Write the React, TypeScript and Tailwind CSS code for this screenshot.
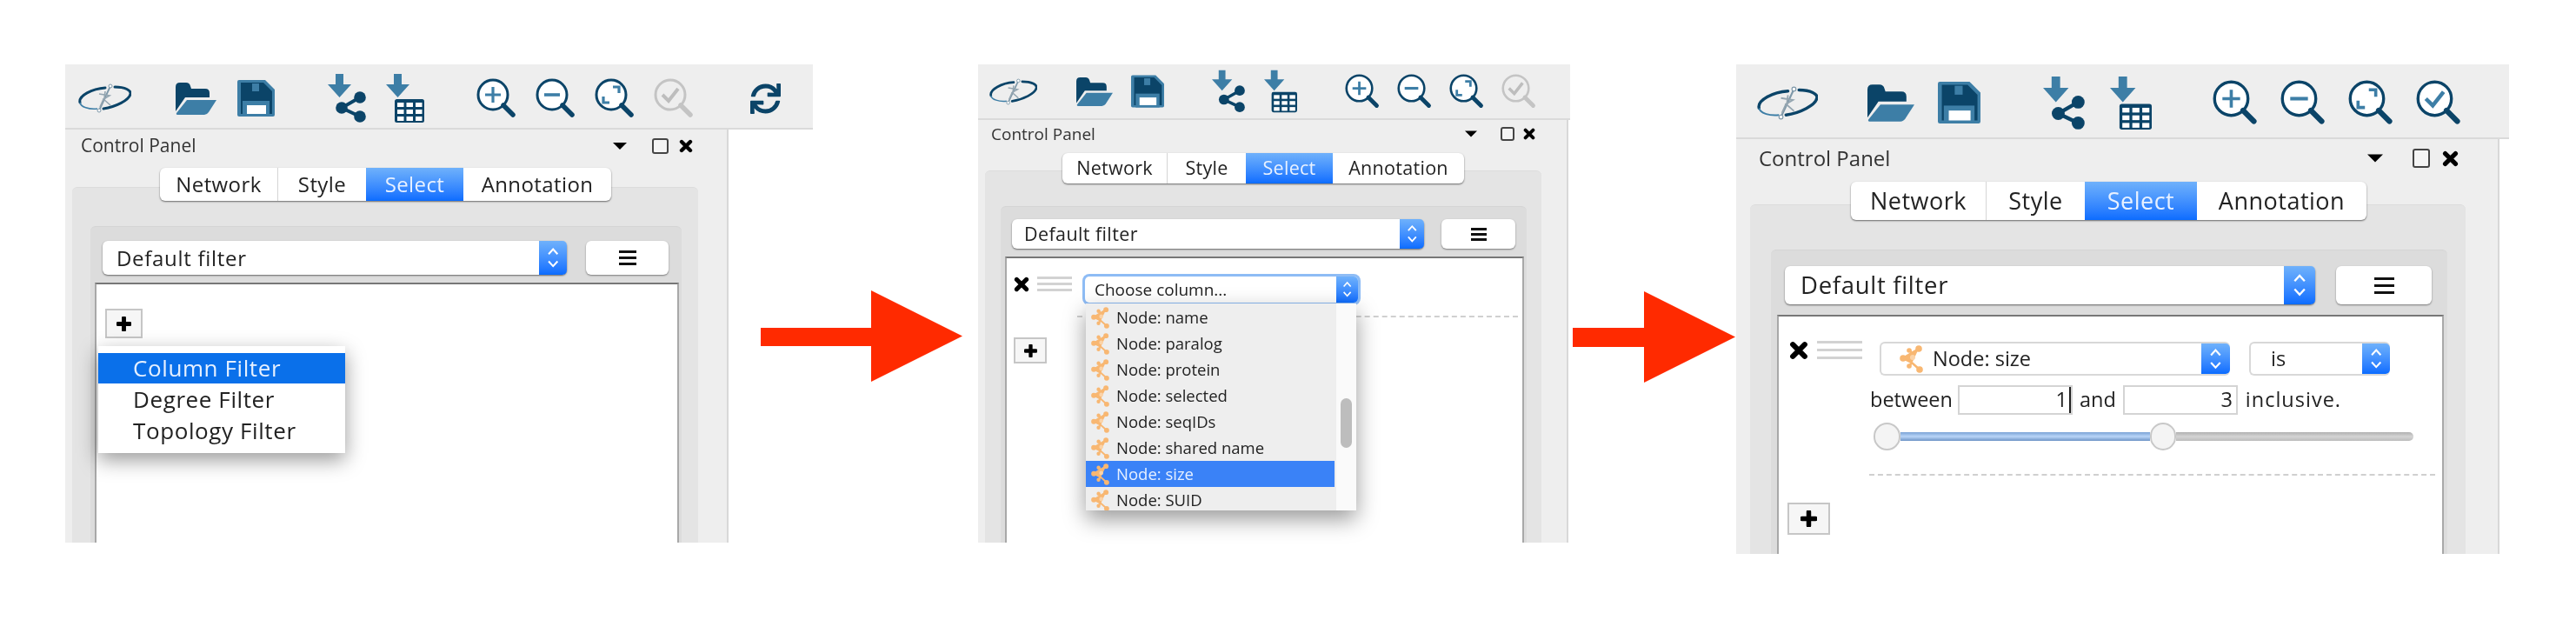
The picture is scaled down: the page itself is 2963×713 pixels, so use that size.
import React from 'react';
import { FaSync } from 'react-icons/fa';

const DARK = '#0b4468';
const MID = '#3d7ea6';

type Cfg = {
  wrap: string; toolbar: string; body: string; header: string; title: string;
  tri: string; box: string; x: string; tabs: string; tabW: [string, string, string, string]; tabText: string;
  outer: string; inner: string; selRow: string; select: string; spin: string; selText: string;
  menuBtn: string; bars: string; white: string;
  icons: { logo: string; folder: string; save: string; net: string; table: string; zin: string; zout: string; fit: string; check: string };
};

const P1: Cfg = {
  wrap: 'w-[860px]',
  toolbar: 'h-[75px] pt-[5px]',
  body: 'w-[763px] h-[475px]',
  header: 'h-[38px] mb-[6px] pl-[18px] pr-[39px]',
  title: 'text-[21px]',
  tri: 'w-[16px] h-[8px]', box: 'ml-[29px] w-[19px] h-[18px]', x: 'ml-[12px] w-[16px] h-[16px]',
  tabs: 'ml-[109px] h-[38px]',
  tabW: ['w-[136px]', 'w-[101px]', 'w-[112px]', 'w-[170px]'],
  tabText: 'text-[24px] tracking-[0.4px]',
  outer: 'ml-[8px] w-[720px] -mt-[16px] pt-[44px]',
  inner: 'ml-[21px] w-[680px] pt-[16px]',
  selRow: 'ml-[14px]',
  select: 'w-[534px] h-[39px] pl-[16px]',
  spin: 'w-[32px]',
  selText: 'text-[24px] tracking-[0.7px]',
  menuBtn: 'ml-[22px] w-[95px] h-[39px]',
  bars: 'w-[20px] h-[17px]',
  white: 'mt-[9px] ml-[5px] w-[672px]',
  icons: {
    logo: 'ml-[15px] w-[61px] h-[34px]', folder: 'ml-[51px] w-[47px] h-[37px]', save: 'ml-[24px] w-[43px] h-[42px]',
    net: 'ml-[61px] w-[44px] h-[56px]', table: 'ml-[23px] w-[44px] h-[56px]',
    zin: 'ml-[60px] w-[46px] h-[46px]', zout: 'ml-[22px] w-[46px] h-[46px]', fit: 'ml-[22px] w-[46px] h-[46px]', check: 'ml-[22px] w-[46px] h-[46px]',
  },
};

const P2: Cfg = {
  wrap: 'w-[681px]',
  toolbar: 'h-[64px]',
  body: 'w-[679px] h-[486px]',
  header: 'h-[32px] mb-[6px] pl-[15px] pr-[36px]',
  title: 'text-[19px]',
  tri: 'w-[14px] h-[8px]', box: 'ml-[27px] w-[16px] h-[16px]', x: 'ml-[10px] w-[14px] h-[14px]',
  tabs: 'ml-[97px] h-[35px]',
  tabW: ['w-[121px]', 'w-[90px]', 'w-[100px]', 'w-[151px]'],
  tabText: 'text-[21.5px] tracking-[0.3px]',
  outer: 'ml-[8px] w-[640px] -mt-[15px] pt-[40px]',
  inner: 'ml-[18px] w-[605px] pt-[14px]',
  selRow: 'ml-[13px]',
  select: 'w-[474px] h-[34px] pl-[14px]',
  spin: 'w-[28px]',
  selText: 'text-[21.5px] tracking-[0.4px]',
  menuBtn: 'ml-[20px] w-[85px] h-[34px]',
  bars: 'w-[18px] h-[15px]',
  white: 'mt-[9px] ml-[5px] w-[597px]',
  icons: {
    logo: 'ml-[13px] w-[55px] h-[31px]', folder: 'ml-[45px] w-[42px] h-[33px]', save: 'ml-[21px] w-[38px] h-[38px]',
    net: 'ml-[55px] w-[38px] h-[50px]', table: 'ml-[22px] w-[38px] h-[50px]',
    zin: 'ml-[55px] w-[40px] h-[40px]', zout: 'ml-[20px] w-[40px] h-[40px]', fit: 'ml-[20px] w-[40px] h-[40px]', check: 'ml-[20px] w-[40px] h-[40px]',
  },
};

const P3: Cfg = {
  wrap: 'w-[889px]',
  toolbar: 'h-[86px] pt-[4px]',
  body: 'w-[878px] h-[477px]',
  header: 'h-[44px] mb-[5px] pl-[26px] pr-[45px]',
  title: 'text-[24px]',
  tri: 'w-[18px] h-[10px]', box: 'ml-[34px] w-[20px] h-[22px]', x: 'ml-[14px] w-[19px] h-[19px]',
  tabs: 'ml-[132px] h-[44px]',
  tabW: ['w-[156px]', 'w-[113px]', 'w-[129px]', 'w-[195px]'],
  tabText: 'text-[27px] tracking-[0.5px]',
  outer: 'ml-[16px] w-[823px] -mt-[18px] pt-[51px]',
  inner: 'ml-[24px] w-[778px] pt-[18px]',
  selRow: 'ml-[16px]',
  select: 'w-[610px] h-[44px] pl-[18px]',
  spin: 'w-[36px]',
  selText: 'text-[27.5px] tracking-[0.7px]',
  menuBtn: 'ml-[24px] w-[110px] h-[44px]',
  bars: 'w-[23px] h-[19px]',
  white: 'mt-[12px] ml-[7px] w-[767px]',
  icons: {
    logo: 'ml-[24px] w-[70px] h-[39px]', folder: 'ml-[57px] w-[54px] h-[43px]', save: 'ml-[27px] w-[49px] h-[50px]',
    net: 'ml-[72px] w-[48px] h-[63px]', table: 'ml-[29px] w-[48px] h-[63px]',
    zin: 'ml-[70px] w-[52px] h-[52px]', zout: 'ml-[26px] w-[52px] h-[52px]', fit: 'ml-[26px] w-[52px] h-[52px]', check: 'ml-[26px] w-[52px] h-[52px]',
  },
};

const Logo = ({ className }: { className: string }) => (
  <svg viewBox="0 0 61 34" className={`shrink-0 ${className}`}>
    <path d="M2 22 C0 14 16 6 31 5" fill="none" stroke={DARK} strokeWidth="3" strokeLinecap="round" />
    <path d="M42 4 C54 4 61 8 60 12 C59 19 43 27 29 29" fill="none" stroke={DARK} strokeWidth="3" strokeLinecap="round" />
    <path d="M2 22 C3 27 12 30 22 29" fill="none" stroke={MID} strokeWidth="1.6" />
    <path d="M37 3 L24 31" stroke="#7d97a8" strokeWidth="1.8" />
    <circle cx="37" cy="3" r="2" fill="#fff" stroke="#7d97a8" />
    <circle cx="24" cy="31" r="2" fill="#fff" stroke="#7d97a8" />
    <path d="M24 12 L36 14 L29 18 L37 25 M29 18 L25 27 M31 9 L30 17" fill="none" stroke="#94a5b0" strokeWidth="1.6" />
  </svg>
);

const Folder = ({ className }: { className: string }) => (
  <svg viewBox="0 0 47 37" className={`shrink-0 ${className}`}>
    <path d="M0 5 Q0 0 5 0 H12 Q16 0 17 4 L18 7 H34 Q39 7 39 12 V17 H11 L0 33 Z" fill={DARK} />
    <path d="M13 20 H47 L38 34 Q36 37 33 37 H3 Q0 37 1 35 Z" fill={MID} />
  </svg>
);

const Save = ({ className }: { className: string }) => (
  <svg viewBox="0 0 43 42" className={`shrink-0 ${className}`}>
    <path d="M2 0 H32 L43 11 V40 Q43 42 41 42 H2 Q0 42 0 40 V2 Q0 0 2 0 Z" fill={MID} />
    <path d="M4 3 H30 L40 13 V39 H4 Z" fill={DARK} />
    <rect x="17" y="4" width="8" height="9" fill={MID} />
    <rect x="6" y="24" width="31" height="18" fill={MID} />
    <rect x="11" y="29" width="22" height="10" fill="#fff" />
  </svg>
);

const DownArrow = () => <path d="M9 0 H18 V12 H27 L13.5 27 L0 12 H9 Z" fill={MID} />;

const ImportNet = ({ className }: { className: string }) => (
  <svg viewBox="0 0 44 56" className={`shrink-0 ${className}`}>
    <DownArrow />
    <path d="M37 27 L16 39 L37 49" fill="none" stroke={DARK} strokeWidth="4" />
    <circle cx="37" cy="27" r="6.8" fill={DARK} />
    <circle cx="16" cy="39" r="6.8" fill={DARK} />
    <circle cx="37" cy="49" r="6.8" fill={DARK} />
  </svg>
);

const ImportTable = ({ className }: { className: string }) => (
  <svg viewBox="0 0 44 56" className={`shrink-0 ${className}`}>
    <DownArrow />
    <rect x="10" y="29" width="34" height="27" rx="2.5" fill={DARK} />
    {[13, 23.5, 34].map((x) =>
      [33, 41, 49].map((y) => <rect key={`${x}-${y}`} x={x} y={y} width="7.5" height="5" fill="#fff" />)
    )}
  </svg>
);

const Lens = ({ className, muted, children }: { className: string; muted?: boolean; children: React.ReactNode }) => (
  <svg viewBox="0 0 46 46" className={`shrink-0 ${className}`}>
    <circle cx="19" cy="19" r="17" fill={muted ? '#eeeeee' : '#fff'} stroke={muted ? '#c4c4c4' : DARK} strokeWidth="3" />
    <path d="M31 31 L42 42" stroke={muted ? '#c4c4c4' : DARK} strokeWidth="5.5" strokeLinecap="round" />
    {children}
  </svg>
);

const ChevronPair = () => (
  <svg viewBox="0 0 14 24" className="w-[45%]">
    <path d="M2 8 L7 2.5 L12 8 M2 16 L7 21.5 L12 16" fill="none" stroke="#fff" strokeWidth="2" />
  </svg>
);

const Spinner = ({ className }: { className: string }) => (
  <div className={`shrink-0 self-stretch rounded-r-[5px] bg-linear-to-b from-[#6fb1fb] to-[#0a6cff] flex items-center justify-center ${className}`}>
    <ChevronPair />
  </div>
);

const Cross = ({ className }: { className: string }) => (
  <svg viewBox="0 0 16 16" className={`shrink-0 ${className}`}>
    <path d="M3 3 L13 13 M13 3 L3 13" stroke="#000" strokeWidth="4.4" strokeLinecap="round" />
  </svg>
);

const Grip = ({ className }: { className: string }) => (
  <div className={`shrink-0 flex flex-col justify-between ${className}`}>
    <div className="h-[3px] bg-[#d2d2d2]" />
    <div className="h-[3px] bg-[#d2d2d2]" />
    <div className="h-[3px] bg-[#d2d2d2]" />
  </div>
);

const NodeIcon = ({ className }: { className: string }) => (
  <svg viewBox="0 0 27 32" className={`shrink-0 ${className}`}>
    <path d="M22 4 L4 15 L14 21 Z" fill="#f8b772" />
    <path d="M22 4 L4 15 L14 20 L23 28 M12 6 L16 13 M11 24 L14 20" fill="none" stroke="#f8b772" strokeWidth="2.6" />
    <circle cx="22" cy="4" r="3.8" fill="#f8b772" />
    <circle cx="4" cy="15" r="3.8" fill="#f8b772" />
    <circle cx="23" cy="28" r="3.8" fill="#f8b772" />
    <circle cx="11" cy="6" r="2.8" fill="#f8b772" />
    <circle cx="11" cy="24" r="2.8" fill="#f8b772" />
    <circle cx="15" cy="14" r="3" fill="#fbd3a8" />
  </svg>
);

const PlusButton = ({ className, icon }: { className: string; icon: string }) => (
  <div className={`flex items-center justify-center bg-[#f6f6f6] border-2 border-[#c6c6c6] ${className}`}>
    <svg viewBox="0 0 16 16" className={icon}>
      <path d="M8 1.5 V14.5 M1.5 8 H14.5" stroke="#000" strokeWidth="4.6" strokeLinecap="round" />
    </svg>
  </div>
);

const Panel = ({ c, activeCheck, refresh, children }: { c: Cfg; activeCheck?: boolean; refresh?: boolean; children?: React.ReactNode }) => (
  <div className={`shrink-0 blur-[0.5px] ${c.wrap}`}>
    <div className={`flex items-center bg-[#eeeeee] border-b-2 border-[#dadada] ${c.toolbar}`}>
      <Logo className={c.icons.logo} />
      <Folder className={c.icons.folder} />
      <Save className={c.icons.save} />
      <ImportNet className={c.icons.net} />
      <ImportTable className={c.icons.table} />
      <Lens className={c.icons.zin}>
        <path d="M19 10 V28 M10 19 H28" stroke={MID} strokeWidth="3.2" />
      </Lens>
      <Lens className={c.icons.zout}>
        <path d="M10 19 H28" stroke={MID} strokeWidth="3.6" />
      </Lens>
      <Lens className={c.icons.fit}>
        <path d="M21 10 H28 V17 M17 28 H10 V21" fill="none" stroke={MID} strokeWidth="3.2" />
      </Lens>
      <Lens className={c.icons.check} muted={!activeCheck}>
        <path d="M10 19 L17 26 L28 12" fill="none" stroke={activeCheck ? MID : '#bdbdbd'} strokeWidth="4" />
      </Lens>
      {refresh && <FaSync color={DARK} className="ml-[65px] w-[35px] h-[35px] shrink-0" />}
    </div>

    <div className={`flex flex-col bg-[#eeeeee] border-r-2 border-[#d8d8d8] ${c.body}`}>
      <div className={`flex items-center shrink-0 ${c.header}`}>
        <span className={`text-[#333] ${c.title}`}>Control Panel</span>
        <svg viewBox="0 0 16 8" className={`ml-auto shrink-0 ${c.tri}`}>
          <path d="M0 0 H16 L8 8 Z" fill="#000" />
        </svg>
        <div className={`shrink-0 rounded-[3px] border-2 border-[#444] bg-[#f4f4f4] ${c.box}`} />
        <Cross className={c.x} />
      </div>

      <div className={`relative z-10 flex self-start shrink-0 rounded-[6px] bg-white shadow-[0_1px_2px_rgba(0,0,0,0.55)] text-[#222] ${c.tabs} ${c.tabText}`}>
        <div className={`flex items-center justify-center border-r border-[#d5d5d5] ${c.tabW[0]}`}>Network</div>
        <div className={`flex items-center justify-center ${c.tabW[1]}`}>Style</div>
        <div className={`flex items-center justify-center text-[#e8f1ff] bg-linear-to-b from-[#6fb1fb] to-[#0a6cff] ${c.tabW[2]}`}>Select</div>
        <div className={`flex items-center justify-center ${c.tabW[3]}`}>Annotation</div>
      </div>

      <div className={`flex flex-col flex-1 min-h-0 rounded-t-[6px] bg-[#e4e4e4] border-t border-[#dcdcdc] ${c.outer}`}>
        <div className={`flex flex-col flex-1 min-h-0 rounded-t-[6px] bg-[#dcdcdc] border-t border-[#d4d4d4] ${c.inner}`}>
          <div className={`flex items-center shrink-0 ${c.selRow}`}>
            <div className={`flex items-center justify-between rounded-[6px] bg-white shadow-[0_1px_2px_rgba(0,0,0,0.55)] text-[#222] ${c.select} ${c.selText}`}>
              Default filter
              <Spinner className={c.spin} />
            </div>
            <div className={`flex items-center justify-center rounded-[6px] bg-white shadow-[0_1px_2px_rgba(0,0,0,0.45)] ${c.menuBtn}`}>
              <div className={`flex flex-col justify-between ${c.bars}`}>
                <div className="h-[3px] bg-[#111]" />
                <div className="h-[3px] bg-[#111]" />
                <div className="h-[3px] bg-[#111]" />
              </div>
            </div>
          </div>
          <div className={`relative flex-1 min-h-0 bg-white border-x-2 border-x-[#a8a8a8] border-t-2 border-t-[#777] ${c.white}`}>
            {children}
          </div>
        </div>
      </div>
    </div>
  </div>
);

const Arrow = ({ className }: { className: string }) => (
  <svg viewBox="0 0 232 105" className={`shrink-0 ${className}`}>
    <path d="M0 43 H127 V0 L232 52.5 L127 105 V64 H0 Z" fill="#ff2a00" />
  </svg>
);

const SmallArrow = ({ className }: { className: string }) => (
  <svg viewBox="0 0 187 105" className={`shrink-0 ${className}`}>
    <path d="M0 42 H82 V0 L187 52.5 L82 105 V64 H0 Z" fill="#ff2a00" />
  </svg>
);

const columns = ['name', 'paralog', 'protein', 'selected', 'seqIDs', 'shared name', 'size', 'SUID'];

const ColumnDropdown = () => (
  <div className="absolute z-20 left-[1px] top-[31px] w-[311px] h-[238px] flex overflow-hidden bg-[#eeeeee] shadow-[0_10px_24px_rgba(0,0,0,0.4)] text-[18.5px] text-[#222]">
    <div className="flex-1 pt-[1px] pr-[2px]">
      {columns.map((name) => (
        <div key={name} className={`flex items-center h-[30px] shrink-0 pl-[6px] ${name === 'size' ? 'bg-[#3a82f7] text-[#e6f0ff]' : ''}`}>
          <NodeIcon className="w-[21px] h-[25px]" />
          <span className="ml-[8px]">Node: {name}</span>
        </div>
      ))}
    </div>
    <div className="w-[23px] shrink-0 bg-[#fafafa] pt-[109px] pl-[5px]">
      <div className="w-[13px] h-[57px] rounded-full bg-[#bdbdbd]" />
    </div>
  </div>
);

export default function App() {
  return (
    <div className="flex items-start w-[2963px] h-[713px] pt-[74px] pl-[75px] bg-white font-['Open_Sans',sans-serif]">
      <Panel c={P1} refresh>
        <div className="pl-[10px] pt-[28px]">
          <PlusButton className="w-[43px] h-[34px]" icon="w-[17px] h-[17px]" />
        </div>
        <div className="absolute z-20 left-[2px] top-[71px] w-[284px] h-[123px] pt-[8px] bg-white shadow-[0_8px_22px_rgba(0,0,0,0.4)] text-[26px] tracking-[0.6px] text-[#222]">
          <div className="flex items-center h-[35px] pl-[40px] bg-[#0a70ea] text-[#e6f0ff]">Column Filter</div>
          <div className="flex items-center h-[36px] pl-[40px]">Degree Filter</div>
          <div className="flex items-center h-[36px] pl-[40px]">Topology Filter</div>
        </div>
      </Panel>

      <Arrow className="-ml-[60px] mt-[260px] w-[232px] h-[105px]" />

      <div className="ml-[18px]">
        <Panel c={P2}>
          <div className="pl-[8px] pt-[21px]">
            <div className="flex">
              <div className="flex w-[73px] shrink-0">
                <Cross className="w-[18px] h-[18px]" />
                <Grip className="ml-[9px] w-[40px] h-[17px]" />
              </div>
              <div className="relative ml-[9px] w-[314px] h-[30px] flex items-center pl-[11px] justify-between rounded-[5px] bg-white ring-[3px] ring-[#8ebcf5] text-[19px] text-[#222]">
                Choose column...
                <Spinner className="w-[25px]" />
                <ColumnDropdown />
              </div>
            </div>
            <div className="ml-[73px] mt-[15px] w-[507px] border-t-2 border-dashed border-[#d0d0d0]" />
            <PlusButton className="mt-[23px] w-[38px] h-[30px]" icon="w-[15px] h-[15px]" />
          </div>
        </Panel>
      </div>

      <SmallArrow className="ml-[3px] mt-[261px] w-[187px] h-[105px]" />

      <div className="ml-[1px]">
        <Panel c={P3} activeCheck>
          <div className="pl-[10px] pt-[28px]">
            <div className="flex">
              <div className="flex w-[94px] pl-[2px] shrink-0">
                <Cross className="w-[22px] h-[22px]" />
                <Grip className="ml-[10px] w-[52px] h-[21px]" />
              </div>
              <div className="flex flex-col">
                <div className="flex items-center ml-[12px] mt-[1px] h-[39px] text-[23.5px] text-[#222]">
                  <div className="flex items-center w-[403px] h-full pl-[21px] rounded-[6px] bg-white border-2 border-[#d8d8d8] border-r-0">
                    <NodeIcon className="w-[27px] h-[32px]" />
                    <span className="ml-[11px]">Node: size</span>
                    <Spinner className="ml-auto w-[33px]" />
                  </div>
                  <div className="flex items-center ml-[22px] w-[162px] h-full pl-[23px] rounded-[6px] bg-white border-2 border-[#d8d8d8] border-r-0">
                    is
                    <Spinner className="ml-auto w-[32px]" />
                  </div>
                </div>
                <div className="flex items-center mt-[11px] h-[34px] text-[23.5px] text-[#222]">
                  <span className="ml-[1px]">between</span>
                  <div className="relative ml-[6px] w-[132px] h-full flex items-center justify-end pr-[4px] border-2 border-[#d4d4d4]">
                    1
                    <div className="absolute right-0 top-0 w-[2px] h-full bg-[#222]" />
                  </div>
                  <span className="ml-[8px]">and</span>
                  <div className="ml-[8px] w-[132px] h-full flex items-center justify-end pr-[4px] border-2 border-[#d4d4d4]">3</div>
                  <span className="ml-[9px] tracking-[1px]">inclusive.</span>
                </div>
                <div className="flex items-center mt-[9px] ml-[5px] h-[32px]">
                  <div className="shrink-0 w-[31px] h-[32px] rounded-full bg-[#f4f4f4] border-2 border-[#c8c8c8]" />
                  <div className="w-[287px] h-[10px] bg-linear-to-b from-[#7ba3d6] via-[#b9d5f8] to-[#6f95c6]" />
                  <div className="shrink-0 w-[30px] h-[32px] rounded-full bg-[#f4f4f4] border-2 border-[#c8c8c8]" />
                  <div className="w-[273px] h-[10px] rounded-r-full bg-linear-to-b from-[#b0b0b0] via-[#d4d4d4] to-[#bcbcbc]" />
                </div>
                <div className="mt-[27px] w-[651px] border-t-2 border-dashed border-[#d0d0d0]" />
              </div>
            </div>
            <PlusButton className="mt-[31px] w-[49px] h-[37px]" icon="w-[19px] h-[19px]" />
          </div>
        </Panel>
      </div>
    </div>
  );
}
